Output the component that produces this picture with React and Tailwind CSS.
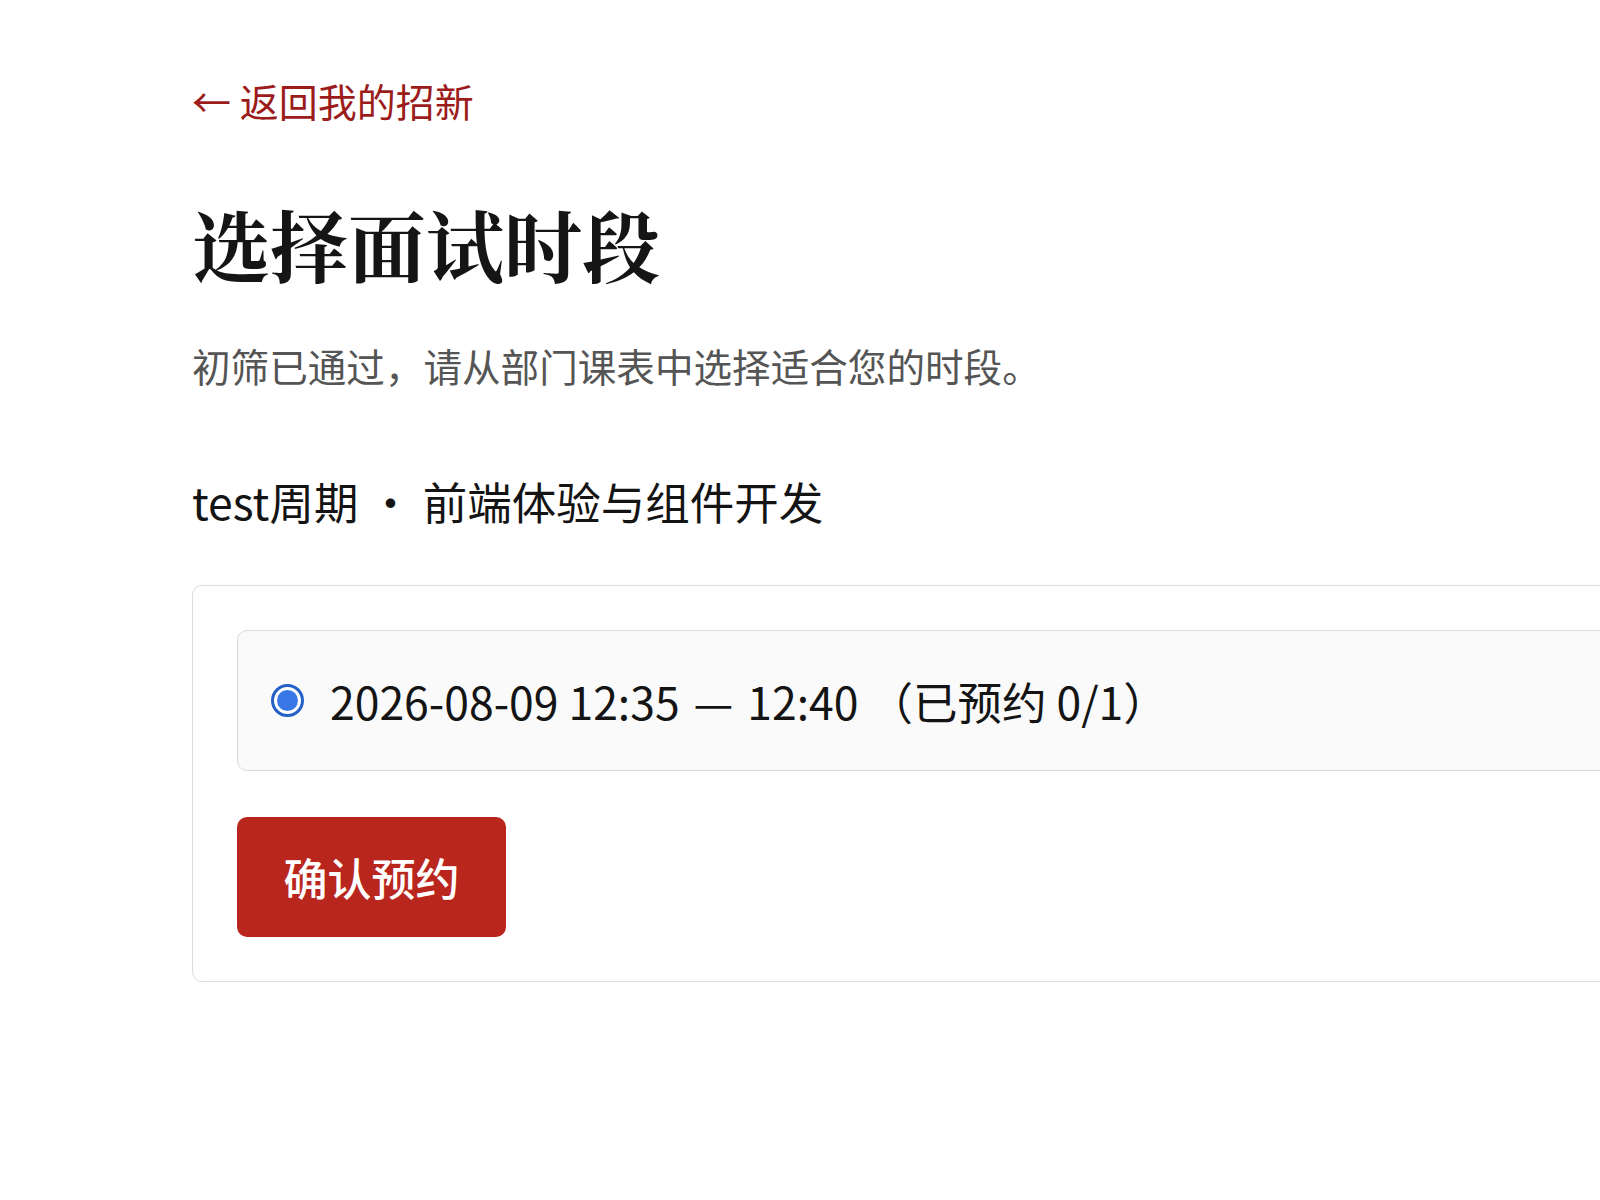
import React, { useState } from 'react';

const slots = [
  { id: 1, date: '2026-08-09', start: '12:35', end: '12:40', booked: 0, capacity: 1 },
];

export default function App() {
  const [selected, setSelected] = useState(1);

  return (
    <div className="w-[1600px] min-h-[1200px] overflow-hidden bg-white font-['Noto_Sans_CJK_SC','Noto_Sans',sans-serif] text-[#141414]">
      <div className="pl-[192px] pt-[72px]">
        <a href="#" className="block text-[39px] leading-[56px] text-[#9c1c1c] no-underline">
          ← 返回我的招新
        </a>

        <h1 className="mt-[67px] text-[78px] leading-[96px] font-bold text-[#151515] font-['Noto_Serif_CJK_SC','Source_Han_Serif_SC','Songti_SC','Liberation_Serif','Noto_Sans_CJK_SC',serif]">
          选择面试时段
        </h1>

        <p className="mt-[46px] text-[38.6px] leading-[56px] text-[#555555]">
          初筛已通过，请从部门课表中选择适合您的时段。
        </p>

        <h2 className="mt-[78px] text-[44.5px] leading-[60px] font-normal text-[#141414]">
          test周期 · 前端体验与组件开发
        </h2>

        {/* booking card, runs off the right edge */}
        <div className="mt-[54px] w-[1520px] rounded-[10px] border border-[#dcdcdc] bg-white p-[44px]">
          <div className="flex flex-col">
            {slots.map((s) => (
              <label
                key={s.id}
                onClick={() => setSelected(s.id)}
                className="flex h-[141px] cursor-pointer items-center gap-[26px] rounded-[10px] border border-[#d9d9d9] bg-[#fafafa] pl-[33px]"
              >
                <span className="flex h-[33px] w-[33px] shrink-0 items-center justify-center rounded-full border-[3px] border-[#2560c8] bg-white">
                  {selected === s.id && <span className="h-[21px] w-[21px] rounded-full bg-[#3a77e6]" />}
                </span>
                <span className="text-[44.5px] leading-[60px] text-[#141414]">
                  {s.date} {s.start}<span className="mx-[4px]"> — </span>{s.end} （已预约 {s.booked}/{s.capacity}）
                </span>
              </label>
            ))}
          </div>

          <button className="mt-[46px] flex h-[120px] w-[269px] items-center justify-center rounded-[10px] bg-[#b9261d] text-[44px] font-medium text-white">
            确认预约
          </button>
        </div>
      </div>
    </div>
  );
}
